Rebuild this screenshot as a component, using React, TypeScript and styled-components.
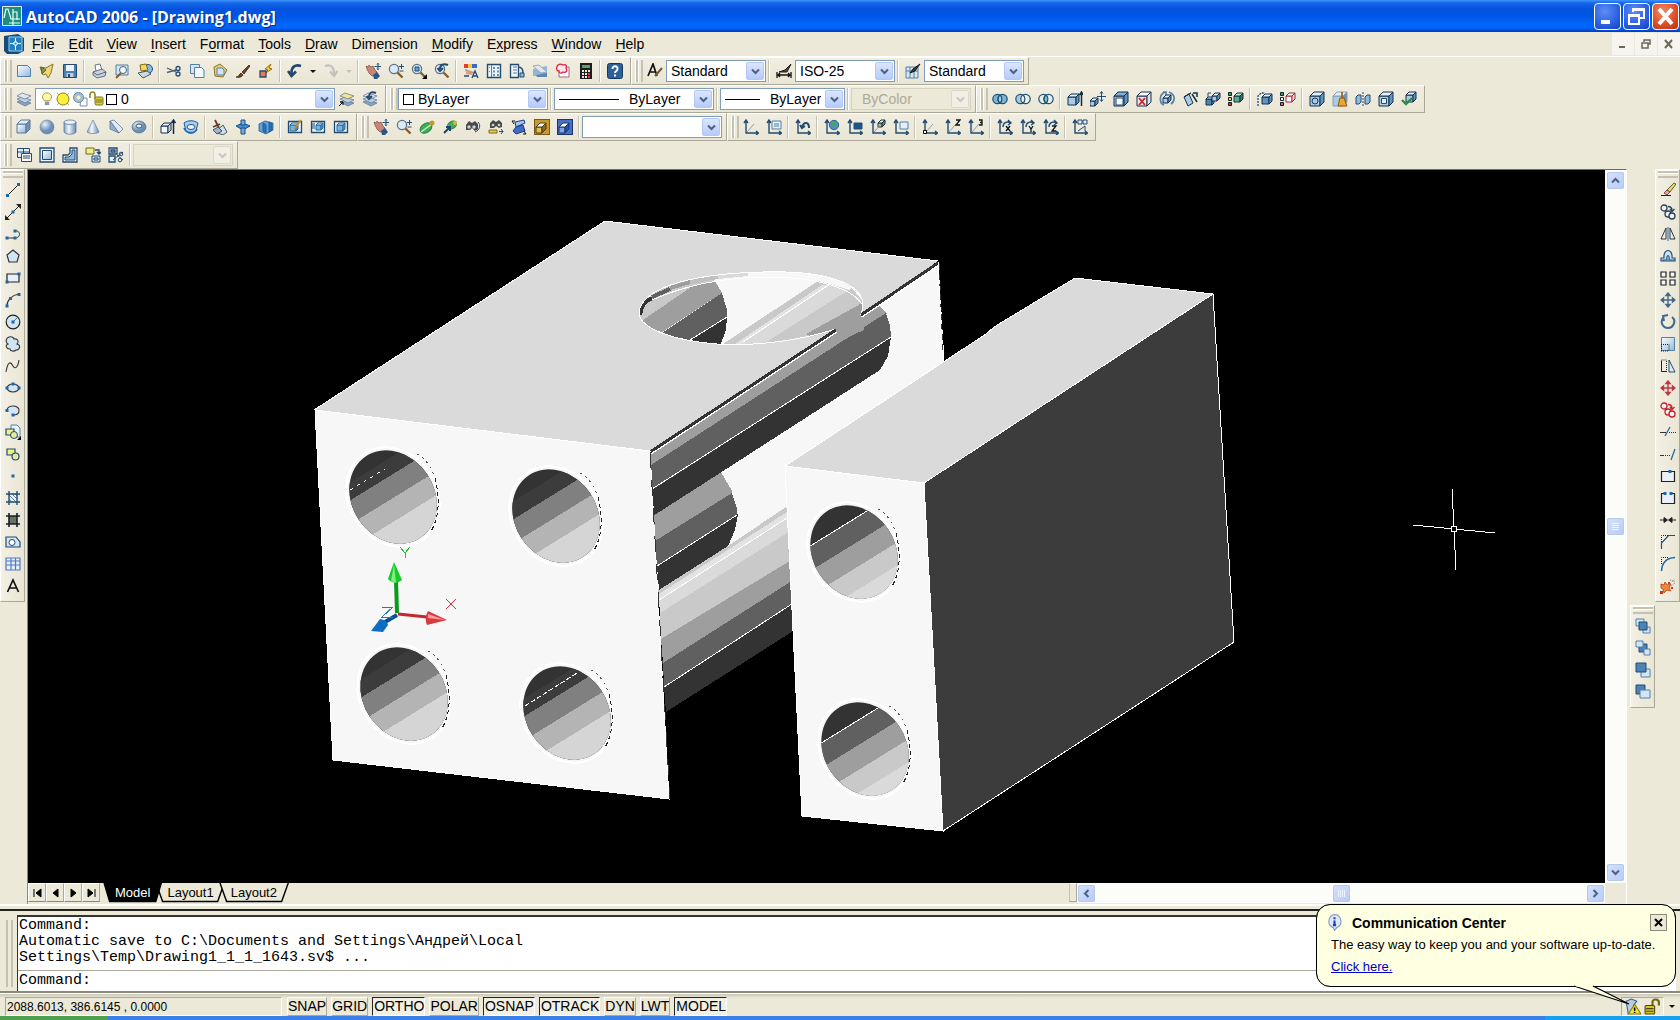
import React, { ReactNode } from "react";
import styled, { createGlobalStyle, css } from "styled-components";

const UI = `"Liberation Sans", Arial, sans-serif`;
const FACE = "#ece9d8";
const NAVY = "#234b70";
const STEEL = "#5580a6";
const PALE = "#d3e5f4";
const SKY = "#8fb9dc";

const Global = createGlobalStyle`
  * { box-sizing: border-box; }
  html, body { margin: 0; height: 100%; }
  body { background: ${FACE}; font: 14px/16px ${UI}; color: #000; overflow: hidden; }
  button, select, input { font: inherit; color: inherit; margin: 0; padding: 0; }
`;

/* ---------- icon primitives ---------- */

type CubeProps = { x?: number; y?: number; s?: number; d?: number; f?: string; t?: string; r?: string; k?: string };
const Cube = ({ x = 1, y = 1, s = 10, d = 4, f = "#a9cbe6", t = "#e3effa", r = "#5f94c0", k = "#14304a" }: CubeProps) => (
  <g stroke={k} strokeLinejoin="round">
    <path fill={f} d={`M${x} ${y + d}h${s}v${s}h-${s}z`} />
    <path fill={t} d={`M${x} ${y + d}l${d}-${d}h${s}l-${d} ${d}z`} />
    <path fill={r} d={`M${x + s} ${y + d}l${d}-${d}v${s}l-${d} ${d}z`} />
  </g>
);

const Axes = ({ children }: { children?: ReactNode }) => (
  <g>
    <path stroke={NAVY} strokeWidth="1.4" d="M3 2v12h12M1 4l2-3 2 3M13 12l2.500 2-2.500 2" />
    {children}
  </g>
);
const Diagonal = <path stroke="#8aa0b4" d="M4 13l7-8" />;
const Dot = ({ x, y }: { x: number; y: number }) => <rect x={x - 1.5} y={y - 1.5} width="3" height="3" fill="#1f66a8" />;
const Lens = ({ children }: { children?: ReactNode }) => (
  <g>
    <path stroke="#8a5a2c" strokeWidth="2.400" d="M9.500 9.500l5 5" />
    <circle cx="6" cy="6" r="4.600" fill="#dcebf7" stroke="#5d7488" strokeWidth="1.300" />
    {children}
  </g>
);
const Hand = (
  <g>
    <path fill="#c98578" stroke="#8c5148" strokeWidth=".8" d="M1 3l2 1 1-2 2 2 2-1 2 4 2 2-1 3-4 1-3-3-2-4z" />
    <path fill="#2c5688" d="M8 12l4-3 3 4-3 3H9z" />
    <path stroke={NAVY} d="M13 0v7M9.500 3.500h7M12 1.500l1-1 1 1M12 5.500l1 1 1-1" />
  </g>
);
const Scissors = (
  <g>
    <path stroke="#4b6076" strokeWidth="1.300" d="M1 5l9 4M1 9.500l9-2.500" />
    <circle cx="12" cy="5.500" r="2" stroke={NAVY} strokeWidth="1.300" />
    <circle cx="12" cy="11" r="2" stroke={NAVY} strokeWidth="1.300" />
  </g>
);
const Brush = <path d="M1 14c3 0 3-3 5-4l2 2c-1 2-4 3-7 2zM7 9l7-7 1 1-6 8z" fill="#6b4425" stroke="#2b1b0e" strokeWidth=".7" />;
const Layers = ({ top = "#dfe8f2" }: { top?: string }) => (
  <g stroke="#57718f" strokeWidth=".7">
    <path fill="#8ba6c4" d="M1 11l5-2 9 3-6 3z" />
    <path fill="#c0d0e2" d="M1 8l5-2 9 3-6 3z" />
    <path fill={top} d="M1 5l5-3 9 3-6 3z" />
  </g>
);
const Cross = ({ c }: { c: string }) => (
  <path stroke={c} fill={c} strokeWidth="1.400" d="M8 2v12M2 8h12M6 3.500L8 1l2 2.500zM6 12.500L8 15l2-2.500zM3.500 6L1 8l2.500 2zM12.500 6L15 8l-2.500 2z" />
);
const Copies = ({ c }: { c: string }) => (
  <g stroke={c} strokeWidth="1.300" fill="#eef4fa">
    <circle cx="4" cy="4" r="3" />
    <circle cx="8" cy="10" r="3" />
    <circle cx="12" cy="12" r="3" />
    <path fill="none" d="M8 2.500c3 0 4 1 4 4M10 5l2 2.500L14.500 5" />
  </g>
);
const Sheet = <path fill="url(#sheen)" stroke={STEEL} d="M1.500 2.500h10l3 3v8h-13z" />;
const Window = <path fill="#e9f2fb" stroke={NAVY} strokeWidth="1.300" d="M1.500 2.500h13v11h-13z" />;

const icons: Record<string, ReactNode> = {
  new: Sheet,
  open: <g><path fill="#f0d77a" stroke="#8c7320" d="M1 4l6 1 7-4-2 9-3 5-2-4-3 1z" /><path fill="#7a9a5a" stroke="#4f6a3b" d="M2 4l5 3-4 4z" /></g>,
  save: <g><path fill="#4b7fb2" stroke={NAVY} d="M1.500 1.500h13v13h-13z" /><path fill="#eef4fa" d="M4 2h8v6H4z" /><path fill="#b8cfe3" d="M4.500 10h7v4h-7z" /><path fill={NAVY} d="M6 11h2v3H6z" /></g>,
  print: <g><path fill="#fff" stroke="#43566c" strokeWidth=".8" d="M5 8L4 2l5-1 2 6" /><path fill="#c8d2dd" stroke="#43566c" strokeWidth=".8" d="M2 9l9-3 4 3-1 4-8 2-4-3z" /><path stroke="#43566c" strokeWidth=".8" d="M2 9l4 3 9-3" /></g>,
  preview: <g><path fill={PALE} stroke={STEEL} d="M2 2h12v10H2z" /><circle cx="9" cy="7" r="3.500" fill="#f4f9fd" stroke="#46617b" /><path stroke="#8a5a2c" strokeWidth="2" d="M7 10l-5 5" /></g>,
  publish: <g><circle cx="11" cy="6" r="4.500" fill="#8bb8e2" stroke="#235083" /><path fill="#f3d65c" stroke="#83691c" d="M3 2l6-1 2 6-7 1z" /><path fill="#d3d9e1" stroke="#43566c" d="M1 10l9-2 4 3-8 4z" /></g>,
  cut: Scissors,
  copy: <g fill={PALE} stroke={STEEL}><path d="M1.500 1.500h9v9h-9z" /><path fill="#f1f7fc" d="M5.500 4.500h7l2.500 2.500v7.500H5.500z" /></g>,
  paste: <g><path fill="#e8cf6e" stroke="#8a742b" d="M2 4l6-3 7 6-4 7-8-1z" /><path fill={PALE} stroke={STEEL} d="M5 5h5l2 2v5H5z" /></g>,
  brush: Brush,
  blockedit: <g><path fill="#f7d23c" stroke="#9c6c13" d="M13 1L7 6l3 1-4 4 8-5-3-1z" /><path fill="#f1764b" stroke={NAVY} strokeWidth="1.300" d="M2 8h6v6H2z" /></g>,
  undo: <path stroke="#26466f" strokeWidth="2.600" d="M14 3C8 1 4 4 4.500 11M1 8l3.500 5L9 8.500" />,
  redo: <path stroke="#c3c2bb" strokeWidth="2.200" d="M2 3c6-2 9 1 9 8M7 8.500l4 4.500 3.500-5" />,
  pan: Hand,
  zoomrt: <Lens><path stroke={NAVY} d="M13.500 1v5M11 3.500h5M11.500 8h4" /></Lens>,
  zoomwin: <Lens><path fill="#6aa0d0" stroke={NAVY} d="M4 4h4v4H4z" /><path fill="#000" d="M16 11v5h-5z" /></Lens>,
  zoomprev: <Lens><path stroke={NAVY} strokeWidth="2" d="M14 2C9 0 6 2 6 6M3.500 5L6 8l3-3" /></Lens>,
  props: <g><path fill="#e23c3c" d="M1 1h4v4H1z" /><path fill="#f3cf2f" d="M5 1h4v4H5z" /><path fill="#3b66d4" d="M9 1h5v4H9z" /><path stroke="#d49a86" strokeWidth="2" d="M2 7l9 3M3 10l6 1" /><path stroke={NAVY} strokeWidth="1.300" d="M9 15l3-7 3 7M10 13h4M1 13h5" /></g>,
  dcenter: <g><path fill="#eef4fa" stroke={NAVY} strokeWidth="1.400" d="M1.500 1.500h13v13h-13z" /><path stroke={STEEL} d="M5.500 2v12" /><path fill="#5f94c0" d="M7 4h2v2H7zM11 4h2v2h-2zM7 7.500h2v2H7zM11 7.500h2v2h-2zM7 11h2v2H7zM11 11h2v2h-2zM3 4h1v1H3zM3 8h1v1H3z" /></g>,
  palettes: <g><path fill="#eef4fa" stroke={NAVY} strokeWidth="1.300" d="M1.500 1.500h8v13h-8z" /><path stroke={STEEL} d="M4 4h4M4 7h4M4 10h4" /><path stroke={NAVY} strokeWidth="1.500" d="M9 4c4 0 5 3 5 6" /><path fill={SKY} stroke={NAVY} d="M11 10h4v4h-4z" /></g>,
  sheets: <g><path fill="#8fb6d8" d="M1 6l14-3v10H1z" /><path fill="#e3e6ea" stroke="#9aa9b8" d="M1 3l6-1 8 7-6 1z" /><path fill="#5f86ac" d="M4 12l11-2v4H5z" /></g>,
  markup: <g><path fill="#fff" stroke="#9a6b8a" d="M4 4h10v10H4z" /><path fill="#fde4e8" stroke="#d8243c" strokeWidth="1.300" d="M3 2c3-2 4 0 5 0 3-1 4 1 3 3 2 3 0 5-3 4-2 2-4 1-4-1-3 0-3-4-1-6z" /></g>,
  calc: <g><path fill="#1d1d1d" d="M2 0h12v16H2z" /><path fill="#5da06b" d="M4 2h8v3H4z" /><path fill="#e8e8e8" d="M4 7h2v2H4zM7 7h2v2H7zM10 7h2v2h-2zM4 10h2v2H4zM7 10h2v2H7zM4 13h2v2H4zM7 13h2v2H7z" /><path fill="#d53838" d="M10 10h2v2h-2zM10 13h2v2h-2z" /></g>,
  help: <g><rect x=".5" y=".5" width="15" height="15" rx="2" fill="#2e6199" stroke="#17385e" /><path stroke="#fff" strokeWidth="1.900" d="M5.500 6c0-4 5.500-3.500 5 0 0 2-2.500 2-2.500 4M8 11.500v2" /></g>,
  textstyle: <g><path stroke="#111" strokeWidth="1.700" d="M1 13L6 1l4 12M3 9h6" /><path stroke="#7c5638" strokeWidth="2" d="M8 13l7-8" /></g>,
  dimstyle: <g><path stroke="#111" strokeWidth="1.300" d="M1 9v6M15 9v6M2 12h12M4 10l-2 2 2 2M12 10l2 2-2 2" /><path fill="#6b4425" stroke="#1a1a1a" d="M3 9l6-2 6-6-4 8z" /></g>,
  tablestyle: <g><path fill={PALE} stroke={STEEL} d="M1 4h12v11H1zM1 8h12M5 4v11M9 4v11" /><path fill="#4b3424" stroke="#1a1a1a" d="M5 10l3-4 7-5-5 7z" /></g>,
  layers: <Layers />,
  layercur: <g><Layers top="#f1e58a" /><path stroke="#000" d="M0 15l4-4M1 11h3v3" /></g>,
  layerprev: <g><Layers /><path stroke={NAVY} strokeWidth="2" d="M14 2C9 0 7 2 7 6M4.500 5L7 8l3-3" /></g>,
  bulb: <g><path fill="#fdf7a8" stroke="#9c8b2c" d="M5 10C1 6 3 1 8 1s7 5 3 9z" /><path fill="#8a98a6" d="M5.500 11h5v4h-5z" /></g>,
  sun: <g><path stroke="#c9b72f" d="M2 2l2 2M14 2l-2 2M2 14l2-2M14 14l-2-2" /><circle cx="8" cy="8" r="6" fill="#fbf03a" stroke="#8c7f2a" /></g>,
  freeze: <g><path fill="#fff" stroke="#7691ac" d="M9 7h6v8H8z" /><circle cx="6.500" cy="6.500" r="5" fill="#a8bfd4" stroke="#6c8aa8" /><circle cx="6.500" cy="6.500" r="2" fill="#f6f2b4" /></g>,
  unlock: <g><path stroke="#8e8a2c" strokeWidth="1.600" d="M1 7V4c0-4 5-4 5 0v4" /><rect x="6" y="6" width="8" height="8" rx="1.500" fill="#d8d038" stroke="#77701d" /><path stroke="#77701d" d="M7 9h6M7 11h6" /></g>,
  box: <Cube x={1} y={1} s={9} d={4} f="url(#sheen)" r="#6f93b8" k="#5b7795" />,
  sphere: <circle cx="8" cy="8" r="7" fill="url(#ball)" stroke="#5e7fa3" strokeWidth=".6" />,
  cylinder: <g stroke="#4d6c8e" strokeWidth=".7"><path fill="url(#tube)" d="M2 3v10c2 3 10 3 12 0V3z" /><ellipse cx="8" cy="3.200" rx="6" ry="2.200" fill="#e9f2fa" /></g>,
  cone: <path fill="url(#tube)" stroke="#5e7fa3" strokeWidth=".7" d="M8 1l6 12c-2 2-10 2-12 0z" />,
  wedge: <g stroke="#4d6c8e" strokeWidth=".7"><path fill="#dfeaf5" d="M2 2l4-1 9 9-4 4z" /><path fill="#8fb1d2" d="M2 2v8l9 4z" /></g>,
  torus: <g><ellipse cx="8" cy="8" rx="7" ry="6" fill="url(#ball)" stroke="#4d6c8e" strokeWidth=".7" /><ellipse cx="8" cy="7" rx="3" ry="2" fill="#eef3f8" stroke="#345578" /></g>,
  extrude: <g><Cube x={1} y={4} s={7} d={3} f="#f2f5f8" r="#c9d4de" /><path stroke="#142c44" strokeWidth="1.500" d="M13.500 15V2M11.500 4l2-3 2 3" /></g>,
  revolve: <g><path fill="#a9cdec" stroke="#1f5a93" d="M1 4c4-3 10-3 14 0l-2 8c-3 3-8 3-10 0z" /><ellipse cx="8" cy="8" rx="4" ry="2.500" fill="#f2efe4" stroke="#1f5a93" /><path stroke="#1f6fb8" strokeWidth="1.600" d="M1 9c2 6 11 6 13 1" /></g>,
  slice: <g><path fill="#cfdcea" stroke="#43566c" d="M3 13l8-7 4 7-4 3z" /><path stroke="#6a3c2c" strokeWidth="1.800" d="M3 1l4 8M1 8l7-3" /><path fill="#9db4cc" stroke="#43566c" d="M1 11l5-3 4 4-5 3z" /></g>,
  section: <g><path fill="#3f8fd6" stroke="#1b4e83" d="M1 7l7-3 7 3-7 4z" /><path fill="#79a9d6" stroke="#1b4e83" d="M6 1h4v5H6zM6 9h4v6H6z" /></g>,
  interfere: <g stroke="#1b4e83" strokeWidth=".7"><path fill="#5fa1dc" d="M1 5l6-3 8 2v7l-7 4-7-3z" /><path fill="#2b74b9" d="M5 4l3 2v8l-3-2zM11 3l3 2v6l-3 2z" /></g>,
  setdraw: <g>{Window}<Cube x={3} y={4} s={6} d={2} f="#6fb7e4" k="#2c6c9c" /><path stroke="#c9912f" strokeWidth="2" d="M7 10l7-9" /></g>,
  setview: <g>{Window}<Cube x={6} y={4} s={5} d={2} f="#6fb7e4" k="#2c6c9c" /><path stroke={NAVY} d="M2 5h3M2 7h3M2 9h3" /></g>,
  setprof: <g>{Window}<Cube x={4} y={4} s={6} d={2} f="#6fb7e4" k="#2c6c9c" /></g>,
  orbit: <g><ellipse cx="7" cy="9" rx="6.500" ry="4.500" transform="rotate(-35 7 9)" fill="#3fae55" stroke="#2d7b47" /><path stroke="#c6efc0" strokeWidth="1.500" d="M2 13L13 5" /><circle cx="13" cy="4" r="2.500" fill="#c29a2b" /></g>,
  orbit2: <g><ellipse cx="10" cy="6" rx="5" ry="3.500" transform="rotate(-35 10 6)" fill="#3fae55" stroke="#2d7b47" /><circle cx="13" cy="4" r="2" fill="#e2b22b" /><path stroke="#1b456c" strokeWidth="2" d="M2 14l6-6M4 8h4v4" /></g>,
  swivel: <g><path fill="#4a4a4a" d="M1 6l3-4 3 2 3-2 3 3v5l-3 2-3-3-2 2H1z" /><circle cx="4" cy="8" r="1.700" fill="#c7d5e2" /><circle cx="9" cy="8" r="1.700" fill="#c7d5e2" /><path stroke={NAVY} d="M13 3c3 3 2 8-3 10" /></g>,
  distance: <g><path fill="#4a4a4a" d="M2 4l3-3 3 2 3-2 3 3v4l-3 1-3-2-2 2H2z" /><circle cx="5" cy="6" r="1.300" fill="#c7d5e2" /><circle cx="11" cy="6" r="1.300" fill="#c7d5e2" /><path fill="#e7c94c" stroke="#7d6a1d" d="M1 11h8v3H1z" /><path stroke={NAVY} d="M11 12.500h4M13 10l2 2.500-2 2.500" /></g>,
  clip: <g><path fill="#a9c3ee" stroke="#1c3d86" d="M4 3l9-2 1 3-9 4z" /><path fill="#3f6cc6" stroke="#1c3d86" d="M5 8l7-2 2 6-9 3-3-3z" /><path stroke="#111" d="M1 2l2 3M1 2h3M15 15l-2-3M15 15h-3" /></g>,
  front: <g><rect x=".5" y=".5" width="15" height="15" fill="#c8992d" stroke="#7a5a12" /><Cube x={2} y={4} s={6} d={4} f="#e2bd5c" t="#fff" r="#8c6a20" k="#4d3a10" /></g>,
  back: <g><rect x=".5" y=".5" width="15" height="15" fill="#4a70c4" stroke="#1b3273" /><Cube x={2} y={4} s={6} d={4} f="#7fa4e2" t="#fff" r="#2a4fa5" k="#1b3273" /></g>,
  union: <g stroke="#1f5273" strokeWidth="1.200" fill="#7fb4d4"><circle cx="5.500" cy="8" r="4.700" /><circle cx="10.500" cy="8" r="4.700" /><path fill="#a9d0e6" d="M8 4c-2.500 2-2.500 6 0 8 2.500-2 2.500-6 0-8z" /></g>,
  subtract: <g stroke="#1f5273" strokeWidth="1.200" fill="#a4cbe2"><circle cx="5.500" cy="8" r="4.700" /><circle cx="10.500" cy="8" r="4.700" fill="#f0efe6" /><path fill="none" d="M8 4c2.500 2 2.500 6 0 8" /></g>,
  intersect: <g stroke="#1f5273" strokeWidth="1.200" fill="#e6edec"><circle cx="5.500" cy="8" r="4.700" /><circle cx="10.500" cy="8" r="4.700" /><path fill="#7cc3d4" d="M8 4c-2.500 2-2.500 6 0 8 2.500-2 2.500-6 0-8z" /></g>,
  extface: <g><Cube x={1} y={3} s={8} d={3} /><path stroke="#142c44" strokeWidth="1.500" d="M14.500 15V2M12.500 4l2-3 1.500 3" /></g>,
  moveface: <g><Cube x={0} y={7} s={5} d={3} /><path stroke={NAVY} d="M11.500 1v9M7 5.500h9M10 2.500l1.500-2 1.500 2M10 8.500l1.500 2 1.500-2" /></g>,
  offface: <g><Cube x={1} y={1} s={10} d={4} t="#7fb0d8" /><path fill="#f5f9fc" stroke={NAVY} d="M3 7h7v7H3z" /></g>,
  delface: <g><Cube x={1} y={1} s={10} d={4} f="#f3e4e6" t="#fff" r="#dcdfe4" /><path stroke="#c4202f" strokeWidth="1.800" d="M3 7l6 7M9 7l-6 7" /></g>,
  rotface: <g><path stroke={STEEL} strokeWidth="1.700" d="M6 1C-1 4 1 13 5 14M10 1c7 3 6 9 2 12M4 1h3v3" /><Cube x={4} y={4} s={5} d={3} /></g>,
  taper: <g stroke="#14304a"><path fill="#a9cbe6" d="M2 6l4 9 5-3-4-9z" /><path fill="#e3effa" d="M2 6l5-3 2-1-4 2z" /><path strokeWidth="1.500" d="M10 3l5 8M11 2l4 0 0 4" /></g>,
  copyface: <g><Cube x={1} y={6} s={6} d={2} f="#4a84b4" /><Cube x={7} y={2} s={5} d={3} /><path stroke={NAVY} d="M3 6V2h3" /></g>,
  colface: <g><path fill="#3a9c4f" stroke="#123" d="M.500 1.500h3v3h-3z" /><path fill="#e8d23d" stroke="#123" d="M.500 6.500h3v3h-3z" /><path fill="#c33" stroke="#123" d="M.500 11.500h3v3h-3z" /><Cube x={6} y={2} s={6} d={3} f="#54b184" t="#bfe5d0" r="#2c7e57" /></g>,
  copyedge: <g><Cube x={5} y={3} s={7} d={3} f="#5c93c0" /><path stroke={NAVY} strokeWidth="1.300" d="M1 15V5l3-3h4" strokeDasharray="2 1" /></g>,
  coledge: <g><path fill="#3a9c4f" stroke="#123" d="M.500 1.500h3v3h-3z" /><path fill="#fff" stroke="#123" d="M.500 6.500h3v3h-3z" /><path fill="#e55" stroke="#123" d="M.500 11.500h3v3h-3z" /><Cube x={6} y={2} s={6} d={3} f="#fff" t="#fff" r="#f6dada" k="#a02834" /></g>,
  imprint: <g><Cube /><circle cx="6" cy="10" r="3" stroke="#123c66" /></g>,
  clean: <g><Cube k="#8c9cae" /><path fill="#f0a530" stroke="#8d560e" d="M8 7h4l3 8H6z" /><path stroke="#8d560e" strokeWidth="1.500" d="M10 7V1" /></g>,
  separate: <g fill={SKY} stroke={NAVY}><path strokeDasharray="2 1" d="M8 1v14" /><path d="M1 6l2-2h3v7l-2 2H1zM10 6l2-2h3v7l-2 2h-3z" /></g>,
  shell: <g><Cube /><path fill="#e8eff6" stroke={NAVY} d="M3.500 7.500h5v5h-5z" /></g>,
  check: <g><Cube x={5} y={1} s={7} d={3} t="#eaf4fb" /><path stroke="#2e8b4a" strokeWidth="2.400" d="M1 9l4 4 6-6" /></g>,
  ucs: <Axes>{Diagonal}</Axes>,
  ucsdlg: <Axes><path fill="#e4eefa" stroke={STEEL} d="M6 2h9v8H6zM8 5h5M8 7h5" /></Axes>,
  ucsprev: <Axes><path stroke={NAVY} strokeWidth="2" d="M14 9c0-6-5-7-7-1M5 6l2 3 3-2" /></Axes>,
  ucsworld: <Axes><circle cx="10" cy="6" r="4.700" fill="#4a90cf" stroke={NAVY} strokeWidth=".8" /><path fill="#4aa85c" d="M7 4l4-2 1 3-3 3zM11 7l3-1-1 3z" /></Axes>,
  ucsobj: <Axes><path fill="#1e568c" stroke={NAVY} d="M7 4h8v6H7z" /></Axes>,
  ucsface: <Axes><Cube x={8} y={1} s={4} d={3} f="#e3d35a" t="#f7f0ae" r="#8d8230" />{Diagonal}</Axes>,
  ucsview: <Axes><path fill="#e4f0fa" stroke={STEEL} d="M7 3h8v7H7z" /></Axes>,
  ucsorg: <Axes>{Diagonal}<path fill="#fff" stroke="#000" d="M1.500 11.500h3v3h-3z" /></Axes>,
  ucsz: <Axes>{Diagonal}<path stroke="#111" strokeWidth="1.300" d="M11 1h4l-4 5h4" /></Axes>,
  ucs3: <Axes>{Diagonal}<path stroke="#111" strokeWidth="1.300" d="M11 1h3v5h-3M12 3.500h2" /></Axes>,
  ucsx: <Axes><path stroke="#111" strokeWidth="1.300" d="M9 7l4 5M13 7l-4 5" /><path stroke={NAVY} strokeWidth="1.400" d="M6 8c0-5 5-6 7-4M11 1l3 3-3 2" /></Axes>,
  ucsy: <Axes><path stroke="#111" strokeWidth="1.300" d="M9 7l2 3 2-3M11 10v3" /><path stroke={NAVY} strokeWidth="1.400" d="M6 8c0-5 5-6 7-4M11 1l3 3-3 2" /></Axes>,
  ucszr: <Axes><path stroke="#111" strokeWidth="1.300" d="M9 7h4l-4 5h4" /><path stroke={NAVY} strokeWidth="1.400" d="M6 8c0-5 5-6 7-4M11 1l3 3-3 2" /></Axes>,
  ucsapply: <Axes><path fill="#e4eefa" stroke={NAVY} d="M6 1h4v4H6zM11 1h4v4h-4z" /><path stroke={NAVY} d="M6 12l7-5M13 12V7" /></Axes>,
  vpdlg: <g fill="#e4eefa" stroke={NAVY}><path d="M1.500 1.500h12v9h-12zM1.500 5h12M7.500 1.500v9" /><path fill="#f8fbfe" d="M5.500 6.500h10v8h-10zM7 9h7M7 11h7" /></g>,
  vpsingle: <g stroke={NAVY}><path fill="#eef4fa" strokeWidth="1.300" d="M1 1h14v14H1z" /><path fill="url(#sheen)" d="M3.500 3.500h9v9h-9z" /></g>,
  vppoly: <g stroke={NAVY}><path fill="#eef4fa" strokeWidth="1.300" d="M8 1h7v14H1V8h5l2-2z" /><path fill={SKY} d="M10 3h3v10H3v-3h4l3-3z" /></g>,
  vpobj: <g><path fill="#eef08a" stroke="#656a20" d="M1 1h8v6H1z" /><path stroke={NAVY} strokeWidth="1.400" d="M10 3h4v3M12 5l2 2 2-2" /><path fill={PALE} stroke={NAVY} d="M7 9h8v6H7zM9 11h4v2H9z" /></g>,
  vpclip: <g><path fill="#e4eefa" stroke={NAVY} strokeWidth="1.300" d="M1 1h8v6H1zM1 9h6v6H1zM3 3h4v2H3z" /><path stroke={NAVY} d="M5 13l10-8M9 8l6 5" /><circle cx="13" cy="7" r="1.800" stroke={NAVY} /><circle cx="12" cy="13" r="1.800" stroke={NAVY} /></g>,
  /* draw */
  line: <g><path stroke="#222" d="M2 14L14 2" /><Dot x={2.5} y={13.5} /><Dot x={13.5} y={2.5} /></g>,
  xline: <g><path stroke="#222" d="M1 15L15 1" /><path fill="#222" d="M0 16v-5l5 5zM16 0v5l-5-5z" /><Dot x={8} y={8} /></g>,
  pline: <g><path stroke="#333" d="M2 12h8M10 12c6 0 6-8 0-7" /><Dot x={2} y={12} /><Dot x={10} y={12} /><Dot x={10} y={5} /></g>,
  polygon: <path fill={PALE} stroke="#333" strokeWidth="1.200" d="M8 2l6 5-2 7H4L2 7z" />,
  rect: <g><path fill="#e9eefb" stroke="#222" strokeWidth="1.200" d="M2 4h12v8H2z" /><Dot x={2} y={12} /><Dot x={14} y={4} /></g>,
  arc: <g><path stroke="#333" strokeWidth="1.200" d="M2 14C2 8 7 3 14 2" /><Dot x={2} y={14} /><Dot x={5.5} y={6.5} /><Dot x={14} y={2.500} /></g>,
  circle: <g><circle cx="8" cy="8" r="6.800" fill={PALE} stroke="#222" strokeWidth="1.200" /><path stroke={STEEL} d="M8 8l4-4" /><Dot x={8} y={8} /></g>,
  cloud: <path fill={PALE} stroke="#333" strokeWidth="1.100" d="M4 1c3-1 5 1 5 2 4-1 5 3 3 5 4 1 3 6-1 6-2 2-6 1-6-1-4 0-5-4-2-5-3-2-2-6 1-7z" />,
  spline: <path stroke="#333" strokeWidth="1.100" d="M1 14C3 2 6 4 8 8s5 1 6-6" />,
  ellipse: <g><ellipse cx="8" cy="8" rx="6" ry="4" fill={PALE} stroke="#333" strokeWidth="1.200" /><Dot x={2} y={8} /><Dot x={14} y={8} /><Dot x={8} y={4} /></g>,
  ellarc: <g><path fill={PALE} stroke="#333" strokeWidth="1.100" d="M2 8c1-6 13-5 12 1 0 3-3 4-6 4" /><Dot x={2} y={8.5} /><Dot x={8} y={13} /></g>,
  insert: <g><path fill="#e9f2fb" stroke={STEEL} d="M6 1h6l3 3v9H6z" /><path fill="#eef08a" stroke={NAVY} strokeWidth="1.200" d="M1 5h8v6H1z" /><circle cx="9" cy="11" r="3.500" fill="#e8ea9a" stroke={NAVY} /><path fill="#000" d="M16 12v4h-4z" /></g>,
  block: <g><path fill="#eef08a" stroke={NAVY} strokeWidth="1.200" d="M2 3h8v6H2z" /><circle cx="10.500" cy="10.500" r="3.500" fill="#e8ea9a" stroke={NAVY} strokeWidth="1.200" /></g>,
  point: <Dot x={8} y={8} />,
  hatch: <g><path fill="#eef4fa" d="M4 4h8v8H4z" /><path stroke={STEEL} d="M4 9l3 3M4 5l7 7M7 4l5 5M10 4l2 2" /><path stroke={NAVY} strokeWidth="1.400" d="M4 1v14M12 1v14M1 4h14M1 12h14" /></g>,
  gradient: <g><path fill="#6d7160" d="M4 4h8v8H4z" /><path stroke="#14202c" strokeWidth="1.600" d="M4 1v14M12 1v14M1 4h14M1 12h14" /></g>,
  region: <g><path fill={PALE} stroke={NAVY} strokeWidth="1.200" d="M1 3h10l4 5v5H1z" /><circle cx="7" cy="8.500" r="3" fill="#fff" stroke={NAVY} /></g>,
  table: <path fill="#e7effb" stroke="#4f7cc0" strokeWidth="1.200" d="M1 2h14v12H1zM1 5h14M1 9h14M6 2v12M10.500 2v12" />,
  mtext: <path stroke="#111" strokeWidth="1.700" d="M2.500 14L8 2l5.500 12M4.500 10h7" />,
  /* modify */
  erase: <g><path stroke="#222" d="M1 13.500h10" /><path fill="#e9dc5a" stroke="#3b3b2a" strokeWidth=".8" d="M7 8l7-7 2 1-6 8z" /><path fill="#e9a0a0" stroke="#66323a" strokeWidth=".8" d="M4 11l3-3 3 2-3 3z" /></g>,
  copyobj: <Copies c="#2c4157" />,
  mirror: <g><path fill="#e9f0f7" stroke="#333" d="M6 2v11H1zM10 2v11h5z" /><path stroke="#1f66a8" d="M8 1v14" /></g>,
  offset: <g stroke="#23527a" strokeWidth="1.200"><path fill="#cfe2f2" d="M1 13v-3h3c-1-10 9-10 8 0h3v3z" /><path d="M3 13v-1h4c-1-6 3-6 2 0h6" /></g>,
  array: <path fill="#f4f7fa" stroke="#222" strokeWidth="1.200" d="M1 2h5v5H1zM10 2h5v5h-5zM1 10h5v5H1zM10 10h5v5h-5z" />,
  move: <Cross c="#42688c" />,
  rotate: <path stroke="#42688c" strokeWidth="2" d="M4 3c-5 5-1 11 4 11s9-7 4-11M8 1L3 2l1 5" />,
  scale: <g><path fill="url(#sheen)" stroke={STEEL} d="M1.500 1.500h13v13h-13z" /><path stroke="#222" strokeDasharray="1 1" d="M1 8.500h8V15M1 15h8M1.500 8v7" /></g>,
  stretch: <g><path stroke="#222" d="M1.500 2.500v11h5" /><path stroke="#222" strokeDasharray="1 1" d="M1.500 2h5v12" /><path fill="#dcebf7" stroke={NAVY} d="M9 2v12h6z" /></g>,
  movered: <Cross c="#c0343e" />,
  copyred: <Copies c="#c81e28" />,
  trim: <g><path stroke="#333" d="M0 8.500h6" /><path stroke="#333" strokeDasharray="1 1" d="M9 8.500h7" /><path stroke="#2f6a9c" strokeWidth="1.300" d="M5 12l5-9" /></g>,
  extend: <g><path stroke="#333" d="M0 9.500h4" /><path stroke="#333" strokeDasharray="1 1" d="M5 9.500h6" /><path stroke="#2f6a9c" strokeWidth="1.300" d="M11 14l4-11" /></g>,
  breakpt: <g><path fill="#e9f0f7" stroke="#222" strokeWidth="1.200" d="M1.500 3.500h13v10h-13z" /><Dot x={10} y={3.500} /></g>,
  break: <g><path fill="#e9f0f7" d="M2 4h12v9H2z" /><path stroke="#222" strokeWidth="1.200" d="M5 3.500H1.500v10h13v-10H11" /><Dot x={5} y={3.500} /><Dot x={11} y={3.500} /></g>,
  join: <path stroke="#222" fill="#222" d="M0 8h6M10 8h6M4 5.500L7.500 8 4 10.500zM12 5.500L8.500 8l3.500 2.500z" />,
  chamfer: <g><path stroke="#222" strokeDasharray="1 1" d="M1.500 8V1.500H9" /><path stroke="#1f4f80" strokeWidth="1.200" d="M1.500 15V9l7-7.500H15" /></g>,
  fillet: <g><path stroke="#222" strokeDasharray="1 1" d="M1.500 8V1.500H9" /><path stroke="#1f66a8" strokeWidth="1.500" d="M1.500 15C2 7 6 2 15 1.500" /></g>,
  explode: <g><path fill="#f08a2c" stroke="#b03a1c" strokeWidth=".8" d="M1 6l3 1 1-3 2 3 4-1-2 4 2 3-4-1-3 3-1-4-2-1z" /><path fill="#d5301c" d="M0 13h3v3H0zM8 4h2v2H8zM11 9h2v2h-2z" /><path stroke="#7b8da0" strokeDasharray="1 1" d="M9 7l6-6M11 8l4-3M10 2l5 2" /></g>,
  /* draw order */
  tofront: <g><path fill={PALE} stroke={STEEL} d="M1 1h8v7H1zM8 9h7v6H8z" /><path fill="#4d82b4" stroke={NAVY} d="M4 4h8v8H4z" /></g>,
  toback: <g><path fill="#4d82b4" stroke={NAVY} d="M4 4h8v8H4z" /><path fill={PALE} stroke={STEEL} d="M1 1h7v6H1zM9 9h6v6H9z" /></g>,
  above: <g><path fill={PALE} stroke={STEEL} d="M6 7h9v8H6z" /><path fill="#4d82b4" stroke={NAVY} d="M1 1h10v9H1z" /></g>,
  under: <g><path fill="#4d82b4" stroke={NAVY} d="M1 1h9v9H1z" /><path fill={PALE} stroke={STEEL} d="M5 6h10v8H5z" /></g>,
};

const Glyph = ({ name, size = 16 }: { name: string; size?: number }) => (
  <svg width={size} height={size} viewBox="0 0 16 16" fill="none" aria-hidden="true">{icons[name]}</svg>
);

/* ---------- title and menu ---------- */

const Shell = styled.div`
  position: relative; display: flex; flex-direction: column; height: 100vh; min-height: 600px; overflow: hidden; background: ${FACE};
`;
const TitleBar = styled.header`
  display: flex; align-items: center; flex: none; height: 32px; padding: 0 1px 0 2px; gap: 4px;
  background: linear-gradient(#3f96fb 0, #1566ea 3px, #0353dd 9px, #0055e5 16px, #0166fa 24px, #0165fb 28px, #0144c8 31px, #0a3cae 32px);
`;
const TitleText = styled.h1`
  flex: 1; margin: 0; padding-top: 2px; color: #fff; font: bold 16px/20px "Open Sans", "Noto Sans", sans-serif; text-shadow: 1px 1px 1px #0a2a86;
`;
const CaptionButtons = styled.div`display: flex; gap: 2px;`;
const CaptionButton = styled.button<{ $close?: boolean }>`
  display: grid; place-items: center; width: 27px; height: 27px; border: 1px solid #fff; border-radius: 4px;
  background: ${p => (p.$close ? "radial-gradient(circle at 40% 30%, #ef8d6d, #dd4a24 60%, #b8330f)" : "radial-gradient(circle at 40% 30%, #5f8df5, #2a5fe2 60%, #1741b5)")};
`;
const MenuBar = styled.nav`
  display: flex; align-items: center; flex: none; height: 25px; padding-left: 4px; border-bottom: 1px solid #fff;
`;
const MenuList = styled.div`display: flex; padding-left: 1px;`;
const MenuItem = styled.button`
  height: 22px; padding: 0 7px; border: 0; background: none; white-space: nowrap;
  u { text-underline-offset: 2px; }
`;
const MdiButtons = styled.div`display: flex; gap: 1px; margin-left: auto;`;
const MdiButton = styled.button`
  display: grid; place-items: center; width: 22px; height: 22px; border: 0; background: #f5f4ee;
`;

const menus: [string, string, string][] = [
  ["", "F", "ile"], ["", "E", "dit"], ["", "V", "iew"], ["", "I", "nsert"], ["F", "o", "rmat"], ["", "T", "ools"],
  ["", "D", "raw"], ["Dime", "n", "sion"], ["", "M", "odify"], ["E", "x", "press"], ["", "W", "indow"], ["", "H", "elp"],
];

/* ---------- toolbars ---------- */

const ToolbarRow = styled.div`display: flex; flex: none; height: 28px;`;
const Toolbar = styled.div`
  display: flex; align-items: center; height: 28px; padding-right: 4px;
  border: 1px solid; border-color: #fff #aca899 #aca899 #fff; background: linear-gradient(#f1eee2, #e9e6d5);
`;
const Grip = styled.span`
  flex: none; width: 7px; height: 22px; margin: 0 0 0 4px;
  border: solid #c5c2b2; border-width: 0 2px; box-shadow: inset 1px 0 #fff, -1px 0 #fff;
`;
const ToolButton = styled.button`
  display: grid; place-items: center; flex: none; width: 23px; height: 22px; border: 0; background: none;
`;
const Divider = styled.span`flex: none; width: 2px; height: 22px; margin: 0 2px; border-left: 1px solid #c5c2b2; border-right: 1px solid #fff;`;
const Caret = styled.button<{ $off?: boolean }>`
  display: grid; place-items: center; width: 13px; height: 22px; border: 0; background: none;
  &::after { content: ""; border: 3px solid transparent; border-top-color: ${p => (p.$off ? "#c3c2bb" : "#111")}; border-bottom: 0; }
`;
const Combo = styled.label<{ $w: number; $off?: boolean }>`
  display: flex; align-items: center; flex: none; width: ${p => p.$w}px; height: 22px; padding: 0 1px 0 4px; gap: 4px;
  border: 1px solid ${p => (p.$off ? "#d6d2c2" : "#7f9db9")}; background: ${p => (p.$off ? FACE : "#fff")}; color: ${p => (p.$off ? "#aca899" : "#000")};
`;
const Picker = styled.select`
  flex: 1; min-width: 0; height: 20px; border: 0; outline: 0; background: none; appearance: none; opacity: 1;
`;
const Drop = styled.span<{ $off?: boolean }>`
  display: grid; place-items: center; flex: none; width: 18px; height: 18px; border-radius: 2px;
  ${p => p.$off
    ? css`border: 1px solid #dcd9cb; background: #f1efe6; color: #c9c7ba;`
    : css`border: 1px solid #b4c8f6; background: linear-gradient(#dbe6fe, #b5cbfa); color: #4d6185;`}
`;
const Swatch = styled.span`flex: none; width: 11px; height: 11px; border: 1px solid #000; background: #fff;`;
const LineSample = styled.span<{ $w: number }>`flex: none; width: ${p => p.$w}px; height: 1px; background: #000;`;
const Indent = styled.span`flex: none; width: 2px;`;
const LayerState = styled.span`display: flex; align-items: center; gap: 1px;`;

const Chevron = ({ turn = 0 }: { turn?: number }) => (
  <svg width="9" height="9" viewBox="0 0 9 9" fill="none" stroke="currentColor" strokeWidth="2" transform={`rotate(${turn})`} aria-hidden="true">
    <path d="M1 2.500l3.500 3.500L8 2.500" />
  </svg>
);

type ComboProps = { w: number; value?: string; name: string; off?: boolean; lead?: ReactNode };
const ComboBox = ({ w, value = "", name, off, lead }: ComboProps) => (
  <Combo $w={w} $off={off}>
    {lead}
    <Picker aria-label={name} disabled={off} defaultValue={value}><option>{value}</option></Picker>
    <Drop $off={off}><Chevron /></Drop>
  </Combo>
);

/* "|" in a tool list stands for a divider */
const Tools = ({ list }: { list: string }) => (
  <>
    {list.split(" ").map((n, i) => n === "|"
      ? <Divider key={i} />
      : <ToolButton key={i} type="button" aria-label={n}><Glyph name={n} /></ToolButton>)}
  </>
);

/* ---------- workspace ---------- */

const Workspace = styled.main`display: flex; flex: 1; min-height: 0;`;
const SideBar = styled.div<{ $drop?: boolean }>`
  display: flex; flex-direction: column; align-items: center; align-self: flex-start; flex: none; width: 25px; padding-bottom: 4px;
  margin-top: ${p => (p.$drop ? 436 : 0)}px;
  border: 1px solid; border-color: #fff #aca899 #aca899 #fff; background: linear-gradient(90deg, #f3f0e4, #e9e6d5);
`;
const SideGrip = styled.span`
  flex: none; width: 20px; height: 7px; margin: 1px 0; border: solid #c5c2b2; border-width: 2px 0; box-shadow: inset 0 1px #fff, 0 -1px #fff;
`;
const Document = styled.section`
  display: flex; flex-direction: column; flex: 1; min-width: 0; margin: 0 3px 0 2px; border-top: 1px solid #6f6c60; border-left: 1px solid #8c897b; border-right: 1px solid #fff;
`;
const ViewRow = styled.div`display: flex; flex: 1; min-height: 0;`;
const Canvas = styled.svg`flex: 1; min-width: 0; width: 0; height: 100%; background: #000; display: block;`;
const VScroll = styled.div`
  display: flex; flex-direction: column; align-items: center; justify-content: space-between; flex: none; width: 21px; padding: 1px 0; background: #fcfcf9;
`;
const HScroll = styled.div`
  display: flex; align-items: center; justify-content: space-between; flex: 0 1 528px; margin-left: auto; height: 20px; background: #fcfcf9;
`;
const ScrollButton = styled.button`
  display: grid; place-items: center; width: 19px; height: 19px; border: 1px solid #fff; border-radius: 3px; outline: 1px solid #b9c9ea; outline-offset: -2px;
  background: linear-gradient(135deg, #d6e2fd, #b7cbf8); color: #4d6185;
`;
const BottomRow = styled.div`display: flex; align-items: flex-start; flex: none; height: 21px; padding-right: 21px;`;
const SplitHandle = styled.span`
  flex: none; width: 8px; height: 19px; margin-left: auto; border: 1px solid; border-color: #fff #aca899 #aca899 #c5c2b2;
  & + div { margin-left: 0; }
`;
const PageButton = styled.button`
  display: grid; place-items: center; flex: none; width: 18px; height: 19px; border: 1px solid; border-color: #fff #aca899 #8c897b #fff; background: ${FACE};
`;
const TabStrip = styled.div`display: flex; margin-left: 4px;`;
const Tab = styled.button<{ $on?: boolean }>`
  position: relative; height: 19px; padding: 0 11px; margin-right: -5px; border: 0; background: none; color: ${p => (p.$on ? "#fff" : "#000")};
  font-size: 13px; text-align: center; z-index: ${p => (p.$on ? 1 : 0)};
  & > svg { position: absolute; inset: 0; width: 100%; height: 100%; z-index: -1; overflow: visible; }
`;

/* ---------- command line and status ---------- */

const CommandDock = styled.section`
  display: flex; flex: none; height: 88px; padding: 4px 4px 0 6px; gap: 4px; border-top: 2px solid #fff;
  border-bottom: 1px solid #8c897b; background: linear-gradient(${FACE} 3px, #222 3px, #222 5px, ${FACE} 5px);
`;
const CommandGrip = styled.span`flex: none; width: 7px; margin: 10px 0 4px; border: solid #c5c2b2; border-width: 0 2px;`;
const CommandBox = styled.div`
  display: flex; flex-direction: column; flex: 1; min-width: 0; margin: 5px 0 0; background: #fff;
  border-top: 2px solid #333; border-left: 1px solid #333; font: 15px/16px "Liberation Mono", "Courier New", monospace;
`;
const History = styled.div`flex: 1; white-space: pre; padding: 1px 0 0 1px; border-bottom: 1px solid #aca899;`;
const Prompt = styled.label`display: flex; flex: none; height: 20px; align-items: center; padding-left: 1px;`;
const PromptInput = styled.input`flex: 1; border: 0; outline: 0; background: none; margin-left: 8px;`;

const StatusBar = styled.footer`
  display: flex; align-items: center; flex: none; height: 24px; padding: 3px 2px 0 5px; gap: 5px; border-top: 1px solid #8c897b;
  background: linear-gradient(#fff 1px, #c9c6b7 1px, ${FACE} 5px);
`;
const Coords = styled.output`
  flex: none; width: 277px; height: 19px; padding: 0 1px; border: 1px solid; border-color: #aca899 #fff #fff #aca899; font-size: 12px; line-height: 18px;
`;
const Modes = styled.div`display: flex; gap: 4px;`;
const Mode = styled.button<{ $on?: boolean }>`
  height: 19px; padding: 0; border: 1px solid; background: ${p => (p.$on ? "#f2f0e5" : FACE)};
  border-color: ${p => (p.$on ? "#222 #fff #fff #222" : "#fff #aca899 #aca899 #fff")};
  ${p => p.$on && css`padding-left: 1px;`}
`;
const Tray = styled.div`display: flex; align-items: center; gap: 1px; margin-left: auto; height: 19px;`;
const TrayIcons = styled.span`display: flex; gap: 3px; border: 1px solid; border-color: #aca899 #fff #fff #aca899; padding: 0 2px;`;
const TaskStrip = styled.div`
  flex: none; height: 4px; background: linear-gradient(90deg, #4fa04c 108px, #3a80e8 108px, #3a80e8 calc(100% - 135px), #18a0ee calc(100% - 135px));
`;

/* ---------- balloon ---------- */

const Balloon = styled.aside`
  position: absolute; right: 4px; bottom: 33px; width: 360px; height: 83px; padding: 9px 8px 8px 9px;
  border: 1px solid #000; outline: 1px solid rgba(0,0,0,.35); outline-offset: -1px; border-radius: 14px; background: #ffffe1;
`;
const BalloonHead = styled.div`display: flex; align-items: center; gap: 9px; height: 17px;`;
const BalloonTitle = styled.h2`flex: 1; margin: 0; font: bold 14px/16px ${UI};`;
const BalloonClose = styled.button`display: grid; place-items: center; width: 17px; height: 17px; border: 1px solid #8c897b; background: ${FACE};`;
const BalloonText = styled.p`margin: 6px 0 0 5px; font-size: 13px; white-space: nowrap;`;
const BalloonLink = styled.a`display: inline-block; margin: 6px 0 0 5px; color: #0000c8; font-size: 13px;`;
const BalloonTail = styled.svg`position: absolute; right: 44px; top: 80px; width: 58px; height: 21px;`;

/* ---------- model drawing ---------- */

type HoleProps = { x: number; y: number; id: string; second?: boolean };
const Hole = ({ x, y, id, second }: HoleProps) => {
  const shades = second
    ? ["#333", "#606060", "#9e9e9e", "#c9c9c9", "#dadada"]
    : ["#333", "#3c3c3c", "#808080", "#b4b4b4", "#d5d5d5"];
  const cuts = second ? [-33, -8, 17, 40] : [-41, -23, 1, 25];
  return (
    <g transform={`translate(${x} ${y})`}>
      <clipPath id={id}><ellipse rx="49" ry="41" transform="rotate(56)" /></clipPath>
      <ellipse rx="52" ry="44" transform="rotate(56)" fill="none" stroke="#fff" strokeWidth="2" />
      <g clipPath={`url(#${id})`}>
        <rect x="-60" y="-60" width="120" height="120" fill={shades[0]} />
        {cuts.map((c, i) => <path key={c} fill={shades[i + 1]} d={`M-60 ${c + 37}L60 ${c - 37}V90H-60z`} />)}
        {second && <path stroke="#fff" d="M-60 4L60 -70" />}
      </g>
      <path stroke="#555" fill="none" strokeDasharray="2 4" d="M24 -43C33 -38 38 -30 41 -21" />
      <path stroke="#222" fill="none" strokeDasharray="4 3" d="M42 -19C48 4 45 24 37 36" />
    </g>
  );
};

const Model = () => (
  <Canvas viewBox="28 170 1577 713" preserveAspectRatio="xMinYMin slice" shapeRendering="crispEdges" fill="none" role="img" aria-label="Shaded solid model">
    <defs>
      <clipPath id="mouth">
        <path d="M639 313C641 291 680 274 763 272C830 270 863 285 863 305L861 315L887 313L905 400L836 330C800 340 770 344 733 345C680 343 640 330 639 313z" />
      </clipPath>
    </defs>

    {/* far wall */}
    <path fill="#f7f7f7" stroke="#fff" d="M650 452L938 262L944 362L790 470V540L655 600z" />

    {/* lower tube */}
    <path fill="#333" d="M664 687L798 600V628L666 712z" />
    <path fill="#606060" d="M663 663L798 577V600L664 687z" />
    <path fill="#9e9e9e" d="M661 639L798 556V577L663 663z" />
    <path fill="#c9c9c9" d="M660 613L798 526V556L661 639z" />
    <path fill="#dadada" d="M659 600L798 511V526L660 613z" />
    <path fill="#c9c9c9" d="M658 589L728 546L798 499V508L659 594z" />
    <path fill="#e3e3e3" d="M659 594L798 505V511L659 600z" />
    <path stroke="#fff" d="M659 600L798 511M664 687L798 600" />

    {/* middle tube */}
    <path fill="#9e9e9e" d="M654 515L721 472L732 491V494L655 542z" />
    <path fill="#606060" d="M655 541L732 493L737 508V515L657 566z" />
    <path fill="#333" d="M657 566L738 514L735 530L728 546L659 590z" />
    <path stroke="#fff" d="M657 566L737 515" />

    {/* upper tube */}
    <path fill="#9e9e9e" d="M650 452L836 330L863 303L878 305L887 314L651 466z" />
    <path fill="#606060" d="M651 465L886 313L890 325L891 337L652 490z" />
    <path fill="#333" d="M652 490L891 337L888 356L880 370L720 473L653 516z" />
    <path stroke="#fff" d="M652 489L891 337" />

    {/* top face */}
    <path fill="#dadada" d="M605 221L938 261L861 315L863 305C863 285 830 270 763 272C680 274 641 291 639 313C640 330 680 343 733 345C770 344 800 340 836 330L650 451L314 410z" />
    <path stroke="#fff" d="M314 410L605 221L938 261" />

    {/* interior seen through the top opening */}
    <g clipPath="url(#mouth)">
      <path fill="#f7f7f7" d="M640 260H870V303L837 330V350H640z" />
      <path fill="#c9c9c9" d="M640 313V280H715L640 328z" />
      <path fill="#9e9e9e" d="M640 322L694 285L715 281L722 293L650 340z" />
      <path fill="#606060" d="M662 333L722 293L727 310V318L680 348z" />
      <path fill="#333" d="M690 340L727 317L726 330L720 346H680z" />
      <path stroke="#fff" d="M690 340L727 317" />
      <path fill="#c9c9c9" d="M723 344L818 281L830 284L741 344z" />
      <path fill="#e3e3e3" d="M735 344L822 285L830 284L741 344z" />
      <path fill="#dadada" d="M743 342L830 284L850 290L763 346L740 350z" />
      <path fill="#c9c9c9" d="M763 344L852 288L864 303L800 344L770 350z" />
      <path fill="#9e9e9e" d="M806 334L864 302V330L830 345z" />
      <path stroke="#fff" d="M743 342L830 284" />
      <path stroke="#333" strokeWidth="4" d="M640 315C641 305 646 301 652 298" />
      <path stroke="#606060" strokeWidth="4" d="M652 297L670 289" />
      <path stroke="#9e9e9e" strokeWidth="4" d="M670 288L690 282" />
      <path stroke="#c0c0c0" strokeWidth="4" d="M690 282L718 277" />
      <path stroke="#dadada" strokeWidth="4" d="M718 277L748 274" />
      <path stroke="#fff" d="M652 300C690 283 730 277 770 277S850 286 862 304" />
    </g>
    <path stroke="#fff" d="M861 317L863 305C863 285 830 270 763 272C680 274 641 291 639 313C640 330 680 343 733 345C770 344 800 340 836 329" />

    {/* thin side strips of the top face */}
    <path stroke="#fff" strokeWidth="4" d="M650 453L836 331M861 316L938 264" />
    <path stroke="#333" strokeWidth="3" d="M650 452L836 330M861 315L938 263" />
    <path stroke="#fff" d="M938 262L944 362" />
    <path stroke="#333" strokeDasharray="6 4" d="M939 264L943 350" />

    {/* front face */}
    <path fill="#f7f7f7" stroke="#fff" d="M315 410L650 451L669 799L333 760z" />
    <path stroke="#333" strokeDasharray="16 12" d="M650 452L670 799" />
    <Hole id="h1" x={393} y={497} />
    <Hole id="h2" x={556} y={516} />
    <Hole id="h3" x={404} y={694} />
    <Hole id="h4" x={567} y={713} />
    <path stroke="#fff" strokeDasharray="3 5" d="M350 490L385 469" />
    <path stroke="#fff" strokeDasharray="5 2" d="M525 706L577 673" />

    {/* second block */}
    <path fill="#dadada" stroke="#fff" d="M785 466L986 334L994 327L1075 278L1213 294L924 483z" />
    <path fill="#3c3c3c" stroke="#fff" d="M924 483L1213 294L1234 642L943 831z" />
    <path fill="#f7f7f7" stroke="#fff" d="M785 466L924 483L943 831L802 816z" />
    <Hole id="h5" x={854} y={552} second />
    <Hole id="h6" x={865} y={749} second />

    {/* UCS icon */}
    <g shapeRendering="auto">
      <path stroke="#0c9a1c" strokeWidth="4" d="M397 613L396 580" />
      <path fill="#19c92a" d="M394 562L388 579Q395 586 402 580z" />
      <path fill="#7df07f" d="M394 564L391 581L396 583z" />
      <path stroke="#c3282e" strokeWidth="3" d="M398 614L427 617" />
      <path fill="#d93a3f" d="M447 620L428 611Q424 618 427 625z" />
      <path fill="#ff9c9c" d="M445 620L428 614V618z" />
      <path stroke="#0a4f96" strokeWidth="4" d="M397 615L385 622" />
      <path fill="#0f6dc4" d="M371 631L380 619Q387 620 388 625L383 632z" />
    </g>
    <path stroke="#1fc42f" d="M400 547L405 553L410 547M405 553V558" />
    <path stroke="#d92a3a" d="M446 599L456 609M456 599L446 609" />
    <path stroke="#1b77d2" d="M382 607H393L382 617H393" />

    {/* crosshair */}
    <path stroke="#fff" d="M1413 525L1495 533M1452 489L1456 570" />
    <path fill="#000" stroke="#fff" d="M1451.500 526.500h5v5h-5z" />
  </Canvas>
);

const PaintDefs = styled.svg`position: absolute; width: 0; height: 0;`;
const SharedPaint = () => (
  <PaintDefs aria-hidden="true">
    <linearGradient id="sheen" x1="0" y1="0" x2="1" y2="1"><stop stopColor="#fff" /><stop offset="1" stopColor="#8fb8dc" /></linearGradient>
    <linearGradient id="tube"><stop stopColor="#7fa3c8" /><stop offset=".4" stopColor="#f1f6fb" /><stop offset="1" stopColor="#6488b0" /></linearGradient>
    <radialGradient id="ball" cx=".35" cy=".3"><stop stopColor="#e8f1fa" /><stop offset="1" stopColor="#6a8db4" /></radialGradient>
  </PaintDefs>
);

const LayoutTab = ({ label, on }: { label: string; on?: boolean }) => (
  <Tab type="button" role="tab" aria-selected={!!on} $on={on}>
    <svg viewBox="0 0 62 19" preserveAspectRatio="none" aria-hidden="true">
      <path d="M0 0L6 18.500H56L62 0" fill={on ? "#000" : FACE} stroke="#000" strokeWidth="1.300" />
    </svg>
    {label}
  </Tab>
);

const pageArrows = ["M2 1v8M9 1L4 5l5 4z", "M8 1L3 5l5 4z", "M3 1l5 4-5 4z", "M9 1v8M2 1l5 4-5 4z"];
const modes: [string, boolean][] = [
  ["SNAP", false], ["GRID", false], ["ORTHO", true], ["POLAR", false], ["OSNAP", true], ["OTRACK", true], ["DYN", false], ["LWT", false], ["MODEL", true],
];

export default function App() {
  return (
    <Shell>
      <Global />
      <SharedPaint />
      <TitleBar>
        <svg width="20" height="20" viewBox="0 0 20 20" fill="none" aria-hidden="true">
          <path fill="#1e8f7e" stroke="#dff3ef" d="M.500.500h19v19H.500z" />
          <path stroke="#e9fffb" strokeWidth="1.200" d="M2 12L4 3h2l3 10h9M11 3v16M7 17h11M11 6h4v8" />
        </svg>
        <TitleText>AutoCAD 2006 - [Drawing1.dwg]</TitleText>
        <CaptionButtons>
          <CaptionButton type="button" aria-label="Minimize"><svg width="19" height="19"><path fill="#fff" d="M3 13h9v4H3z" /></svg></CaptionButton>
          <CaptionButton type="button" aria-label="Restore">
            <svg width="19" height="19" fill="none" stroke="#fff" strokeWidth="2"><path d="M6 5V2h11v9h-4M2 8h10v9H2z" /><path strokeWidth="3" d="M6 2.500h11M2 8.500h10" /></svg>
          </CaptionButton>
          <CaptionButton type="button" aria-label="Close" $close><svg width="19" height="19"><path stroke="#fff" strokeWidth="4" d="M3 2l13 15M16 2L3 17" /></svg></CaptionButton>
        </CaptionButtons>
      </TitleBar>

      <MenuBar>
        <svg width="20" height="20" viewBox="0 0 20 20" fill="none" aria-hidden="true">
          <path fill="#174a7a" d="M0 2l14-2 6 4v13l-6 3H3L0 17z" />
          <path fill="#1f7fc0" stroke="#9ad0ee" d="M5 3h13v14H5z" />
          <path stroke="#fff" d="M11.500 4v12M6 9.500h11" /><path fill="#1f7fc0" stroke="#fff" d="M10 8h3v3h-3z" />
        </svg>
        <MenuList>
          {menus.map(([a, b, c]) => <MenuItem key={a + b + c} type="button">{a}<u>{b}</u>{c}</MenuItem>)}
        </MenuList>
        <MdiButtons>
          <MdiButton type="button" aria-label="Minimize drawing"><svg width="10" height="10"><path fill="#6b6759" d="M1 7h6v2H1z" /></svg></MdiButton>
          <MdiButton type="button" aria-label="Restore drawing"><svg width="10" height="10" fill="none" stroke="#6b6759" strokeWidth="1.500"><path d="M3 3V1h6v4H7M1 4h6v5H1z" /></svg></MdiButton>
          <MdiButton type="button" aria-label="Close drawing"><svg width="10" height="10" stroke="#6b6759" strokeWidth="2"><path d="M1 1l7 8M8 1L1 9" /></svg></MdiButton>
        </MdiButtons>
      </MenuBar>

      <ToolbarRow>
        <Toolbar>
          <Grip />
          <Tools list="new open save | print preview publish | cut copy paste brush blockedit | undo" />
          <Caret type="button" aria-label="Undo list" />
          <Tools list="redo" />
          <Caret type="button" aria-label="Redo list" $off />
          <Tools list="| pan zoomrt zoomwin zoomprev | props dcenter palettes sheets markup calc | help" />
        </Toolbar>
        <Toolbar>
          <Grip />
          <Tools list="textstyle" />
          <ComboBox w={100} value="Standard" name="Text style" />
          <Tools list="| dimstyle" />
          <ComboBox w={100} value="ISO-25" name="Dimension style" />
          <Tools list="| tablestyle" />
          <ComboBox w={100} value="Standard" name="Table style" />
        </Toolbar>
      </ToolbarRow>

      <ToolbarRow>
        <Toolbar>
          <Grip />
          <Tools list="layers" />
          <ComboBox w={300} value="0" name="Layer" lead={
            <LayerState>
              <Glyph name="bulb" size={14} /><Glyph name="sun" /><Glyph name="freeze" /><Glyph name="unlock" /><Swatch />
            </LayerState>
          } />
          <Tools list="layercur layerprev" />
        </Toolbar>
        <Toolbar>
          <Grip />
          <ComboBox w={150} value="ByLayer" name="Colour" lead={<Swatch />} />
          <Divider />
          <ComboBox w={160} value="ByLayer" name="Linetype" lead={<><LineSample $w={60} /><Indent /></>} />
          <Divider />
          <ComboBox w={125} value="ByLayer" name="Lineweight" lead={<><LineSample $w={35} /><Indent /></>} />
          <Divider />
          <ComboBox w={120} value="ByColor" name="Plot style" off lead={<Indent />} />
        </Toolbar>
        <Toolbar>
          <Grip />
          <Tools list="union subtract intersect | extface moveface offface delface rotface taper copyface colface | copyedge coledge | imprint clean separate shell check" />
        </Toolbar>
      </ToolbarRow>

      <ToolbarRow>
        <Toolbar>
          <Grip />
          <Tools list="box sphere cylinder cone wedge torus | extrude revolve | slice section interfere | setdraw setview setprof" />
        </Toolbar>
        <Toolbar>
          <Grip />
          <Tools list="pan zoomrt orbit orbit2 swivel distance clip front back |" />
          <ComboBox w={140} name="View" />
        </Toolbar>
        <Toolbar>
          <Grip />
          <Tools list="ucs ucsdlg | ucsprev | ucsworld ucsobj ucsface ucsview | ucsorg ucsz ucs3 | ucsx ucsy ucszr | ucsapply" />
        </Toolbar>
      </ToolbarRow>

      <ToolbarRow>
        <Toolbar>
          <Grip />
          <Tools list="vpdlg vpsingle vppoly vpobj vpclip |" />
          <ComboBox w={100} name="Viewport scale" off />
        </Toolbar>
      </ToolbarRow>

      <Workspace>
        <SideBar>
          <SideGrip />
          <Tools list="line xline pline polygon rect arc circle cloud spline ellipse ellarc insert block point hatch gradient region table mtext" />
        </SideBar>
        <Document>
          <ViewRow>
            <Model />
            <VScroll>
              <ScrollButton type="button" aria-label="Scroll up"><Chevron turn={180} /></ScrollButton>
              <ScrollButton type="button" aria-label="Vertical position"><svg width="9" height="9"><path stroke="#eef4ff" d="M1 1.500h7M1 3.500h7M1 5.500h7M1 7.500h7" /></svg></ScrollButton>
              <ScrollButton type="button" aria-label="Scroll down"><Chevron /></ScrollButton>
            </VScroll>
          </ViewRow>
          <BottomRow>
            {pageArrows.map((d, i) => (
              <PageButton key={d} type="button" aria-label={`Tab scroll ${i + 1}`}>
                <svg width="11" height="10" fill="#000" stroke="#000" aria-hidden="true"><path d={d} /></svg>
              </PageButton>
            ))}
            <TabStrip role="tablist">
              <LayoutTab label="Model" on />
              <LayoutTab label="Layout1" />
              <LayoutTab label="Layout2" />
            </TabStrip>
            <SplitHandle />
            <HScroll>
              <ScrollButton type="button" aria-label="Scroll left"><Chevron turn={90} /></ScrollButton>
              <ScrollButton type="button" aria-label="Horizontal position"><svg width="9" height="9"><path stroke="#eef4ff" d="M1.500 1v7M3.500 1v7M5.500 1v7M7.500 1v7" /></svg></ScrollButton>
              <ScrollButton type="button" aria-label="Scroll right"><Chevron turn={-90} /></ScrollButton>
            </HScroll>
          </BottomRow>
        </Document>
        <SideBar $drop>
          <SideGrip />
          <Tools list="tofront toback above under" />
        </SideBar>
        <SideBar>
          <SideGrip />
          <Tools list="erase copyobj mirror offset array move rotate scale stretch movered copyred trim extend breakpt break join chamfer fillet explode" />
        </SideBar>
      </Workspace>

      <CommandDock>
        <CommandGrip />
        <CommandBox>
          <History>{"Command:\nAutomatic save to C:\\Documents and Settings\\Андрей\\Local\nSettings\\Temp\\Drawing1_1_1_1643.sv$ ..."}</History>
          <Prompt>Command:<PromptInput type="text" /></Prompt>
        </CommandBox>
      </CommandDock>

      <StatusBar>
        <Coords>2088.6013, 386.6145 , 0.0000</Coords>
        <Modes>{modes.map(([m, on]) => <Mode key={m} type="button" aria-pressed={on} $on={on}>{m}</Mode>)}</Modes>
        <Tray>
          <TrayIcons>
            <svg width="17" height="17" viewBox="0 0 16 16" fill="none" aria-hidden="true">
              <path fill="#b8cbe4" stroke="#3b5f94" d="M2 3l5-2 5 2-3 4 1 4-6 4z" /><path fill="#f9e52c" stroke="#8b7a10" d="M10 6l6 9H4z" /><path stroke="#000" strokeWidth="1.500" d="M10 9v3M10 13v1" />
            </svg>
            <svg width="17" height="17" viewBox="0 0 16 16" fill="none" aria-hidden="true">
              <path stroke="#6f6410" strokeWidth="2" d="M8 8V4c0-4 6-3 6 0v3" /><rect x="1" y="7" width="9" height="8" rx="1" fill="#d8c41e" stroke="#4d4508" /><path stroke="#4d4508" d="M2 10h7M2 12.500h7" />
            </svg>
          </TrayIcons>
          <Caret type="button" aria-label="Status bar menu" />
        </Tray>
      </StatusBar>
      <TaskStrip />

      <Balloon role="status">
        <BalloonHead>
          <svg width="17" height="17" viewBox="0 0 16 16" aria-hidden="true">
            <path fill="#dfe9fb" stroke="#7f95bd" d="M8 .500a6.500 6.500 0 0 1 2 12.500L8 15.500 7 13A6.500 6.500 0 0 1 8 .500z" />
            <path stroke="#1b45a8" strokeWidth="2" d="M8 3v2M8 6v5M6.500 10.500h3" />
          </svg>
          <BalloonTitle>Communication Center</BalloonTitle>
          <BalloonClose type="button" aria-label="Close"><svg width="9" height="9"><path stroke="#000" strokeWidth="2" d="M1 1l7 7M8 1L1 8" /></svg></BalloonClose>
        </BalloonHead>
        <BalloonText>The easy way to keep you and your software up-to-date.</BalloonText>
        <BalloonLink href="#">Click here.</BalloonLink>
        <BalloonTail viewBox="0 0 58 21" aria-hidden="true">
          <path fill="#ffffe1" stroke="#000" strokeWidth="1.300" d="M1 1L56 19L20 1" /><path stroke="#ffffe1" strokeWidth="2" d="M3 0.500H19" />
        </BalloonTail>
      </Balloon>
    </Shell>
  );
}
